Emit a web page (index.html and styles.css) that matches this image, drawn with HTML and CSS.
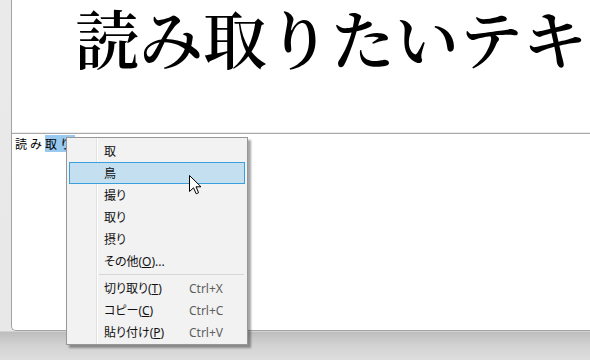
FILE: index.html
```html
<!DOCTYPE html>
<html lang="ja">
  <head>
    <meta charset="UTF-8" />
    <meta name="viewport" content="width=device-width, initial-scale=1.0" />
    <title>変換候補</title>
    <link rel="stylesheet" href="styles.css">
  </head>
  <body>
    <div id="screen">
      <div class="pane">
        <div class="doc">
          <p class="doc-text">読み取りたいテキスト</p>
        </div>
        <div class="edit">
          <span class="edit-text">読み<span class="selected">取り</span></span>
        </div>
      </div>

      <div class="menu">
        <div class="item">取</div>
        <div class="item active">鳥</div>
        <div class="item">撮り</div>
        <div class="item">取り</div>
        <div class="item">摂り</div>
        <div class="item">その他(<u>O</u>)...</div>
        <div class="separator"></div>
        <div class="item"><span class="label">切り取り(<u>T</u>)</span><span class="shortcut">Ctrl+X</span></div>
        <div class="item"><span class="label">コピー(<u>C</u>)</span><span class="shortcut">Ctrl+C</span></div>
        <div class="item"><span class="label">貼り付け(<u>P</u>)</span><span class="shortcut">Ctrl+V</span></div>
      </div>

      <svg class="cursor" width="13" height="20" viewBox="0 0 13 20">
        <path d="M0.5 0.5 V16.5 L4.5 12.8 L7.2 18.8 L9.6 17.7 L7 11.8 H12 Z" fill="#fff" stroke="#000" stroke-width="1" stroke-linejoin="miter" />
      </svg>
    </div>
  </body>
</html>
```

FILE: styles.css
```css
body {
  margin: 0;
  width: 590px;
  height: 360px;
  overflow: hidden;
  background: #e9e9e9;
}

#screen {
  position: relative;
  width: 590px;
  height: 360px;
  background: linear-gradient(to bottom, #eaeaea 0, #e8e8e8 331px, #bdbdbd 332px, #d2d2d2 345px, #dedede 360px);
}

.pane {
  margin-left: 11px;
  height: 330px;
  display: flex;
  flex-direction: column;
  background: #fff;
  border-left: 1px solid #a3a3a3;
  border-bottom: 1px solid #a3a3a3;
  border-bottom-left-radius: 5px;
  overflow: hidden;
}

.doc {
  height: 133px;
  padding-left: 63px;
  border-bottom: 1px solid #a9a9a9;
  box-shadow: inset 0 -1px 0 #ececec;
  overflow: hidden;
  white-space: nowrap;
}

.doc-text {
  margin: 4px 0 0;
  font-family: "Noto Serif CJK JP", "Noto Sans CJK JP", serif;
  font-size: 64px;
  line-height: 64px;
  font-weight: 600;
  color: #000;
}

.edit {
  flex: 1;
  padding: 1px 0 0 3px;
}

.edit-text {
  font-family: "Noto Sans CJK JP", sans-serif;
  font-size: 12px;
  line-height: 17px;
  letter-spacing: 3px;
  color: #000;
}

.selected {
  background: #99c9ef;
}

.menu {
  position: absolute;
  left: 66px;
  top: 137px;
  width: 176px;
  padding: 2px 2px 1px;
  background-color: #f2f2f2;
  background-image: linear-gradient(to right, transparent 29px, #e2e2e2 29px, #e2e2e2 30px, #fff 30px, #fff 31px, transparent 31px);
  border: 1px solid #979797;
  box-shadow: 3px 3px 2px rgba(0, 0, 0, 0.35);
  font-family: "Noto Sans", "Noto Sans CJK JP", sans-serif;
  font-feature-settings: "palt";
  font-size: 12px;
  color: #111;
}

.item {
  display: flex;
  align-items: center;
  height: 20px;
  padding-left: 34px;
  border: 1px solid transparent;
  white-space: nowrap;
}

.item.active {
  background: #c4e0f0;
  border-color: #3a9fdb;
}

.label {
  width: 85px;
}

.shortcut {
  color: #5e5e5e;
}

.separator {
  height: 1px;
  margin: 2px 1px 2px 30px;
  background: #d7d7d7;
}

.cursor {
  position: absolute;
  left: 189px;
  top: 175px;
}
```
